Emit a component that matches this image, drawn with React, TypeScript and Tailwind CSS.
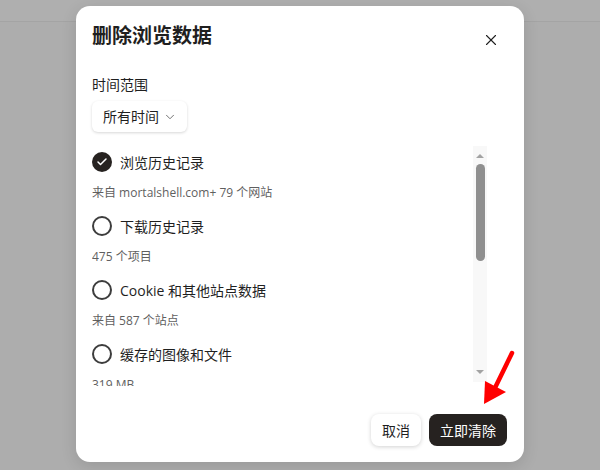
import { Check, ChevronDown, X } from 'lucide-react';

const items = [
  { label: '浏览历史记录', sub: '来自 mortalshell.com+ 79 个网站', checked: true },
  { label: '下载历史记录', sub: '475 个项目', checked: false },
  { label: 'Cookie 和其他站点数据', sub: '来自 587 个站点', checked: false },
  { label: '缓存的图像和文件', sub: '319 MB', checked: false },
];

const font = { fontFamily: '"Segoe UI", "Open Sans", "Noto Sans CJK SC", sans-serif' };

export default function App() {
  return (
    <div className="relative w-[600px] h-[470px] overflow-hidden bg-[#adadad]" style={font}>
      {/* page behind the dimmed overlay */}
      <div className="h-[22px] border-b border-[#a4a4a4] bg-[#afafaf]" />

      {/* dialog */}
      <div className="absolute left-[76px] top-[6px] w-[448px] h-[456px] rounded-[14px] bg-white shadow-[0_4px_16px_rgba(0,0,0,0.12)] flex flex-col px-4">
        <div className="flex items-start justify-between pt-[16px]">
          <h1 className="text-[20px] leading-[28px] font-bold text-[#1f1f1f]">删除浏览数据</h1>
          <button className="w-8 h-8 mt-[2px] mr-[1px] flex items-center justify-center text-[#1f1f1f]">
            <X className="w-[18px] h-[18px]" strokeWidth={1.5} />
          </button>
        </div>

        <p className="mt-[19px] text-[14px] leading-5 text-[#1f1f1f]">时间范围</p>
        <div className="mt-[6px]">
          <button className="h-[31px] w-[95px] pl-[11px] pr-[10px] flex items-center justify-between rounded-[6px] bg-white shadow-[0_1px_3px_rgba(0,0,0,0.16)] text-[14px] text-[#1f1f1f]">
            所有时间
            <ChevronDown className="w-[14px] h-[14px] text-[#5f5f5f]" strokeWidth={1.5} />
          </button>
        </div>

        {/* list with scrollbar */}
        <div className="mt-[14px] flex h-[240px]">
          <div className="flex-1 overflow-hidden">
            {items.map((it) => (
              <div key={it.label}>
                <div className="h-8 flex items-center gap-2">
                  {it.checked ? (
                    <span className="w-5 h-5 rounded-full bg-[#262220] flex items-center justify-center">
                      <Check className="w-3 h-3 text-white" strokeWidth={3} />
                    </span>
                  ) : (
                    <span className="w-5 h-5 rounded-full border-2 border-[#3d3d3d]" />
                  )}
                  <span className="text-[14px] text-[#1f1f1f]">{it.label}</span>
                </div>
                <div className="h-8 flex items-center pb-[2px] text-[12px] text-[#5f5f5f]">{it.sub}</div>
              </div>
            ))}
          </div>
          <div className="w-[14px] h-[236px] mr-[21px] bg-[#f8f8f8] flex flex-col items-center">
            <svg width="10" height="8" viewBox="0 0 10 8" className="mt-[6px]">
              <path d="M1 6 L5 2 L9 6 Z" fill="#a3a3a3" />
            </svg>
            <div className="mt-[4px] w-[9px] h-[97px] rounded-full bg-[#8f8f8f]" />
            <div className="flex-1" />
            <svg width="10" height="8" viewBox="0 0 10 8" className="mb-[6px]">
              <path d="M1 2 L5 6 L9 2 Z" fill="#a3a3a3" />
            </svg>
          </div>
        </div>

        <div className="flex-1" />
        <div className="flex justify-end gap-2 pb-4 pr-[1px]">
          <button className="h-8 w-[50px] rounded-[8px] bg-white shadow-[0_1px_4px_rgba(0,0,0,0.18)] text-[14px] text-[#1f1f1f]">
            取消
          </button>
          <button className="h-8 w-[78px] rounded-[8px] bg-[#262220] text-[14px] text-white">
            立即清除
          </button>
        </div>
      </div>

      {/* red annotation arrow */}
      <svg className="absolute left-0 top-0 pointer-events-none" width="600" height="470">
        <line x1="512" y1="353" x2="492" y2="394" stroke="#ff0000" strokeWidth="4.5" strokeLinecap="round" />
        <polygon points="484,404 485,381 506,392" fill="#ff0000" />
      </svg>
    </div>
  );
}
